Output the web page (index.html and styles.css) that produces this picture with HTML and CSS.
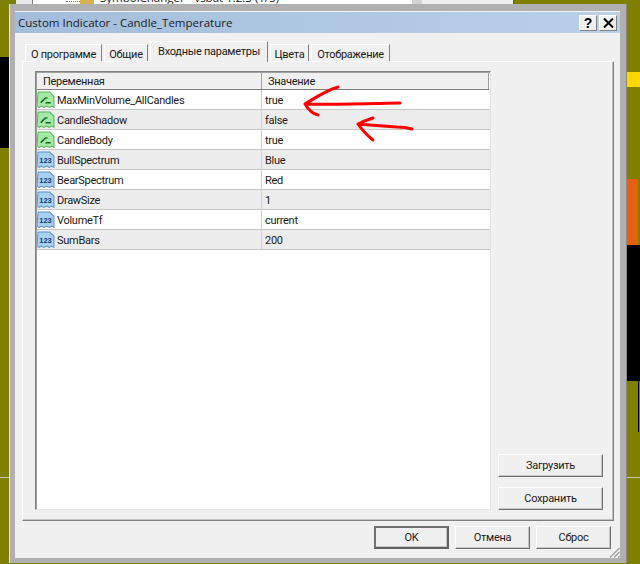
FILE: index.html
```html
<!DOCTYPE html>
<html lang="ru">
<head>
<meta charset="utf-8">
<title>Custom Indicator - Candle_Temperature</title>
<link rel="stylesheet" href="styles.css">
</head>
<body>
<svg width="0" height="0" class="defs">
  <symbol id="ico-bool" viewBox="0 0 17 17">
    <path d="M1 1H12L16 5V15.5l-2-1.2-2.5 1.2-2.5-1.2-2.5 1.2-2.5-1.2-2 1.2-2-1.2z" fill="#a6e8a6" stroke="#58b858"/>
    <path d="M3.5 11L8 6.5h2M8 11h5" fill="none" stroke="#0c6a20" stroke-width="1.4"/>
  </symbol>
  <symbol id="ico-num" viewBox="0 0 17 17">
    <path d="M1 1H12L16 5V15.5l-2-1.2-2.5 1.2-2.5-1.2-2.5 1.2-2.5-1.2-2 1.2-2-1.2z" fill="#a9d0f2" stroke="#5b93c9"/>
  </symbol>
</svg>

<div class="bg-black-left"></div>
<div class="bg-line"></div>
<div class="bg-yellow"></div>
<div class="bg-orange"></div>
<div class="bg-black-right"></div>
<div class="bg-thin"></div>
<div class="bg-window">
  <span class="bg-win-main">
    <span class="bg-win-dots"></span>
    <span class="bg-win-icon"></span>
    <span class="bg-win-title">SymbolChanger - vsbat 1.2.3 (1/5)</span>
  </span>
  <span class="bg-win-side"></span>
  <span class="bg-win-end"></span>
</div>

<div class="dialog">
  <div class="dialog-inner">
    <header class="titlebar">
      <span class="title">Custom Indicator - Candle_Temperature</span>
      <span class="title-btns">
        <span class="tb-btn">?</span>
        <span class="tb-btn">
          <svg width="11" height="10" viewBox="0 0 11 10"><path d="M1 0.5L10 9.5M10 0.5L1 9.5" stroke="#000" stroke-width="2" fill="none"/></svg>
        </span>
      </span>
    </header>

    <div class="body">
      <nav class="tabs">
        <span class="tab t1">О программе</span>
        <span class="tab t2">Общие</span>
        <span class="tab active">Входные параметры</span>
        <span class="tab t4">Цвета</span>
        <span class="tab t5">Отображение</span>
      </nav>

      <section class="page">
        <div class="grid">
          <div class="grid-head">
            <span class="hcell col-a">Переменная</span>
            <span class="hcell col-b">Значение</span>
          </div>
          <div class="row">
            <span class="cell col-a"><svg class="ico" viewBox="0 0 17 17"><use href="#ico-bool"/></svg><span class="name">MaxMinVolume_AllCandles</span></span>
            <span class="cell col-b"><span class="val">true</span></span>
          </div>
          <div class="row alt">
            <span class="cell col-a"><svg class="ico" viewBox="0 0 17 17"><use href="#ico-bool"/></svg><span class="name">CandleShadow</span></span>
            <span class="cell col-b"><span class="val">false</span></span>
          </div>
          <div class="row">
            <span class="cell col-a"><svg class="ico" viewBox="0 0 17 17"><use href="#ico-bool"/></svg><span class="name">CandleBody</span></span>
            <span class="cell col-b"><span class="val">true</span></span>
          </div>
          <div class="row alt">
            <span class="cell col-a"><svg class="ico" viewBox="0 0 17 17"><use href="#ico-num"/><text x="8" y="11.5" text-anchor="middle" class="ico-text">123</text></svg><span class="name">BullSpectrum</span></span>
            <span class="cell col-b"><span class="val">Blue</span></span>
          </div>
          <div class="row">
            <span class="cell col-a"><svg class="ico" viewBox="0 0 17 17"><use href="#ico-num"/><text x="8" y="11.5" text-anchor="middle" class="ico-text">123</text></svg><span class="name">BearSpectrum</span></span>
            <span class="cell col-b"><span class="val">Red</span></span>
          </div>
          <div class="row alt">
            <span class="cell col-a"><svg class="ico" viewBox="0 0 17 17"><use href="#ico-num"/><text x="8" y="11.5" text-anchor="middle" class="ico-text">123</text></svg><span class="name">DrawSize</span></span>
            <span class="cell col-b"><span class="val">1</span></span>
          </div>
          <div class="row">
            <span class="cell col-a"><svg class="ico" viewBox="0 0 17 17"><use href="#ico-num"/><text x="8" y="11.5" text-anchor="middle" class="ico-text">123</text></svg><span class="name">VolumeTf</span></span>
            <span class="cell col-b"><span class="val">current</span></span>
          </div>
          <div class="row alt">
            <span class="cell col-a"><svg class="ico" viewBox="0 0 17 17"><use href="#ico-num"/><text x="8" y="11.5" text-anchor="middle" class="ico-text">123</text></svg><span class="name">SumBars</span></span>
            <span class="cell col-b"><span class="val">200</span></span>
          </div>
        </div>
        <div class="side">
          <button class="btn side-btn">Загрузить</button>
          <button class="btn side-btn">Сохранить</button>
        </div>
      </section>

      <footer class="footer">
        <button class="btn foot-btn default">OK</button>
        <button class="btn foot-btn">Отмена</button>
        <button class="btn foot-btn">Сброс</button>
      </footer>
    </div>
    <svg class="grip" width="11" height="11" viewBox="0 0 11 11"><path d="M10.5 1L1 10.5M10.5 5L5 10.5M10.5 9L9 10.5" stroke="#9a9a9a" stroke-width="1.2" fill="none"/></svg>
  </div>
</div>

<svg class="arrows" width="640" height="564" viewBox="0 0 640 564">
  <path d="M400 103C385 103 345 105 305 104M338 87C325 91 315 98 305 104C308 109 313 114 318 115" />
  <path d="M412 129C405 127 400 127 397 127C380 126 368 125 358 124M373 118C367 120 362 122 358 124C362 130 368 136 373 140" />
</svg>
</body>
</html>
```
FILE: styles.css
```css
* { box-sizing: border-box; }
html, body { margin: 0; padding: 0; }
body {
  width: 640px;
  height: 564px;
  position: relative;
  overflow: hidden;
  background: #808000;
  font-family: Roboto, "Liberation Sans", sans-serif;
  font-size: 11px;
  letter-spacing: -.28px;
  color: #1a1a1a;
}
.defs { position: absolute; }
.ico-text { font-family: "Liberation Sans", sans-serif; font-size: 7px; font-weight: bold; fill: #0b3a6e; letter-spacing: 0; }

.bg-black-left { position: absolute; left: 0; top: 57px; width: 9px; height: 91px; background: #000; }
.bg-line { position: absolute; left: 0; top: 477px; width: 640px; height: 1px; background: #c8c8a0; }
.bg-yellow { position: absolute; left: 627px; top: 72px; width: 13px; height: 15px; background: #ffd700; }
.bg-orange { position: absolute; left: 627px; top: 179px; width: 11px; height: 66px; background: #e95f12; }
.bg-black-right { position: absolute; left: 627px; top: 245px; width: 13px; height: 136px; background: #000; }
.bg-thin { position: absolute; left: 638px; top: 381px; width: 1px; height: 51px; background: #000; }

.bg-window { position: absolute; left: 16px; top: 0; width: 498px; height: 5px; display: flex; overflow: hidden; background: #e8e8e8; }
.bg-win-main { width: 380px; background: #fff; margin-left: 16px; border-left: 1px solid #808080; position: relative; }
.bg-win-dots { position: absolute; left: 33px; top: 1px; width: 14px; border-top: 1px dotted #808080; }
.bg-win-icon { position: absolute; left: 47px; top: 0; width: 14px; height: 4px; background: #d8b050; }
.bg-win-title { position: absolute; left: 67px; top: -10px; font-family: "Open Sans", sans-serif; font-size: 11.5px; letter-spacing: 0; white-space: nowrap; }
.bg-win-side { width: 102px; background: #f0f0f0; border-left: 10px solid #d4d4d4; border-right: 1px solid #555; }
.bg-win-end { flex: 1; background: #d8e2f0; }

.dialog {
  position: absolute;
  left: 9px;
  top: 4px;
  width: 618px;
  height: 559px;
  background: #b0b0b0;
  border-left: 1px solid #e6e6e6;
  border-right: 1px solid #8a8a8a;
  padding: 7px 6px 5px 5px;
}
.dialog-inner {
  height: 100%;
  position: relative;
  background: #f0f0f0;
  border-top: 1px solid #f4f4f4;
  display: flex;
  flex-direction: column;
}
.titlebar {
  height: 21px;
  flex: none;
  background: linear-gradient(90deg, #a3bdda, #b9d0e9);
  display: flex;
  align-items: center;
  justify-content: space-between;
  padding: 0 3px 0 3px;
}
.title { font-family: "Open Sans", sans-serif; font-size: 11.5px; letter-spacing: 0; color: #000; opacity: .85; white-space: nowrap; }
.title-btns { display: flex; gap: 2px; }
.tb-btn {
  width: 18px;
  height: 16px;
  background: #f0f0f0;
  border: 1px solid;
  border-color: #fff #808080 #808080 #fff;
  display: flex;
  align-items: center;
  justify-content: center;
  font: bold 14px "Liberation Sans", sans-serif;
  letter-spacing: 0;
  color: #000;
}

.body { flex: 1; display: flex; flex-direction: column; padding: 8px 6px 0 7px; min-height: 0; }
.tabs { height: 20px; flex: none; display: flex; gap: 2px; align-items: flex-end; padding-left: 3px; position: relative; z-index: 1; }
.tab {
  height: 17px;
  display: flex;
  align-items: center;
  justify-content: center;
  background: #f0f0f0;
  border: 1px solid;
  border-color: #fff #808080 transparent #fff;
  border-bottom: 0;
  padding-top: 2px;
  white-space: nowrap;
}
.t1 { width: 77px; }
.t2 { width: 44px; }
.t4 { width: 39px; }
.t5 { width: 79px; }
.tab.active { width: 118px; height: 21px; margin-bottom: -1px; padding: 0 0 2px; }

.page {
  height: 460px;
  flex: none;
  display: flex;
  border: 1px solid;
  border-color: #fff #808080 #808080 #fff;
  box-shadow: inset -1px -1px 0 #c0c0c0;
  padding: 9px 10px 10px 12px;
}
.grid {
  width: 456px;
  height: 439px;
  flex: none;
  background: #fff;
  border: 1px solid;
  border-color: #808080 #e4e4e4 #e4e4e4 #808080;
  box-shadow: inset 1px 1px 0 #a0a0a0;
  padding: 1px 0 0 1px;
}
.grid-head {
  height: 17px;
  display: flex;
  background: #f0f0f0;
  border-bottom: 1px solid #808080;
  margin-right: 1px;
}
.hcell { display: flex; align-items: center; border-right: 1px solid #a0a0a0; }
.hcell.col-a { width: 225px; padding-left: 6px; }
.hcell.col-b { flex: 1; padding-left: 6px; }
.row { height: 20px; display: flex; border-bottom: 1px solid #c8c8c8; }
.row.alt { background: #ececec; }
.cell { display: flex; align-items: center; }
.col-a.cell { width: 225px; border-right: 1px solid #d0d0d0; padding-left: 0; }
.col-b.cell { flex: 1; padding-left: 3px; }
.ico { width: 18px; height: 18px; flex: none; }
.name { margin-left: 2px; padding-top: 2px; white-space: nowrap; }
.val { padding-top: 2px; }

.side { flex: 1; display: flex; flex-direction: column; justify-content: flex-end; gap: 10px; padding: 0 0 0 7px; align-items: flex-start; }
.btn {
  font: inherit;
  letter-spacing: inherit;
  color: #1a1a1a;
  background: #f0f0f0;
  border: 1px solid;
  border-color: #fff #707070 #707070 #fff;
  box-shadow: inset -1px -1px 0 #c4c4c4;
  padding: 0;
  margin: 0;
}
.side-btn { width: 105px; height: 23px; }
.footer { flex: none; display: flex; justify-content: flex-end; gap: 6px; padding: 5px 3px 0 0; }
.foot-btn { width: 75px; height: 23px; }
.foot-btn.default { border: 2px solid; border-color: #707070 #606060 #606060 #707070; }
.grip { position: absolute; right: 0; bottom: 0; }

.arrows { position: absolute; left: 0; top: 0; pointer-events: none; }
.arrows path { fill: none; stroke: #f00; stroke-width: 3; stroke-linecap: round; stroke-linejoin: round; }
```
